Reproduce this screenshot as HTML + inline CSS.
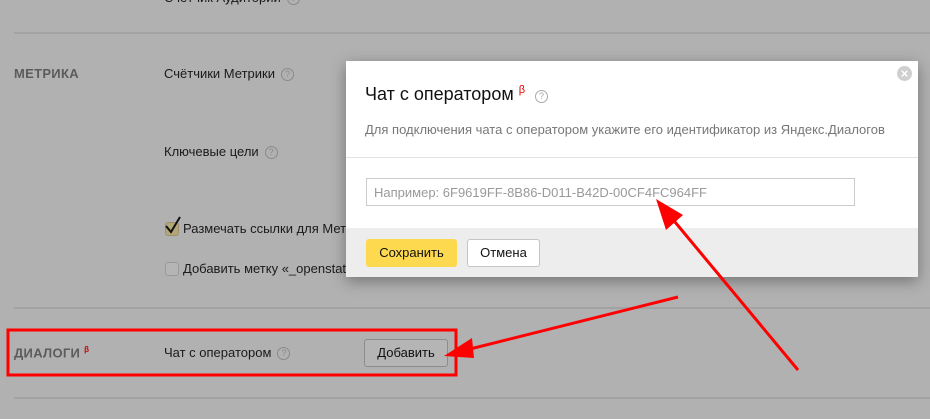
<!DOCTYPE html>
<html><head><meta charset="utf-8"><style>
*{margin:0;padding:0;box-sizing:border-box}
body{width:930px;height:419px;overflow:hidden;background:#b1b1b1;font-family:"Liberation Sans","DejaVu Sans",sans-serif;position:relative;color:#111}
.a{position:absolute;white-space:nowrap}
.line{position:absolute;left:14px;right:0;height:2px;background:#a3a3a3}
.sec{font-weight:bold;color:#5c5c5c;font-size:13px;letter-spacing:.3px}
.t{font-size:13px;color:#1a1a1a}
.q{display:inline-block;width:13px;height:13px;border:1px solid #8a8a8a;border-radius:50%;font-size:9px;line-height:11px;text-align:center;color:#8a8a8a;vertical-align:1px;margin-left:6px}
.cb{position:absolute;width:14px;height:14px;border:1px solid #999;border-radius:3px;background:#b5b5b5}
.modal{position:absolute;left:346px;top:61px;width:572px;height:216px;background:#fff;box-shadow:0 4px 14px rgba(0,0,0,.35)}
.btn{position:absolute;border-radius:3px;font-size:13px;text-align:center}
</style></head><body>
<div class="a t" style="left:164px;top:-10px">Счётчик Аудитории<span class="q">?</span></div>
<div class="line" style="top:32px"></div>
<div class="line" style="top:307px"></div>
<div class="line" style="top:397px"></div>
<div class="a sec" style="left:14px;top:66px">МЕТРИКА</div>
<div class="a t" style="left:164px;top:66px">Счётчики Метрики<span class="q">?</span></div>
<div class="a t" style="left:164px;top:144px">Ключевые цели<span class="q">?</span></div>
<div class="cb" style="left:165px;top:222px;background:#b3a77a;border-color:#9a8f66"></div>
<svg class="a" style="left:163px;top:215px" width="20" height="22"><path d="M3 11 L8 17 L17 2" stroke="#111" stroke-width="2" fill="none"/></svg>
<div class="a t" style="left:183px;top:221px">Размечать ссылки для Метрики</div>
<div class="cb" style="left:165px;top:262px"></div>
<div class="a t" style="left:183px;top:261px">Добавить метку «_openstat»</div>
<div class="a sec" style="left:14px;top:345px">ДИАЛОГИ <sup style="color:#c00;font-size:8px">β</sup></div>
<div class="a t" style="left:164px;top:345px">Чат с оператором<span class="q">?</span></div>
<div class="btn" style="left:364px;top:339px;width:84px;height:28px;border:1px solid #8c8c8c;background:#b5b5b5;line-height:26px">Добавить</div>

<div class="modal">
  <div class="a" style="left:19px;top:23px;font-size:18px;color:#111">Чат с оператором <sup style="color:#e00;font-size:11px">β</sup><span class="q" style="margin-left:10px;border-color:#aaa;color:#aaa">?</span></div>
  <div class="a" style="left:19px;top:61px;font-size:13px;color:#777">Для подключения чата с оператором укажите его идентификатор из Яндекс.Диалогов</div>
  <div class="a" style="left:0;right:0;top:96px;height:1px;background:#e3e3e3"></div>
  <div class="a" style="left:20px;top:117px;width:489px;height:28px;border:1px solid #ccc;font-size:13px;color:#999;padding:6px 7px">Например: 6F9619FF-8B86-D011-B42D-00CF4FC964FF</div>
  <div class="a" style="left:0;right:0;top:167px;bottom:0;background:#ededed"></div>
  <div class="btn" style="left:20px;top:178px;width:91px;height:28px;background:#fdd94f;line-height:28px">Сохранить</div>
  <div class="btn" style="left:121px;top:178px;width:73px;height:28px;border:1px solid #c5c5c5;background:#fff;line-height:26px">Отмена</div>
  <div class="a" style="left:551px;top:5px;width:15px;height:15px;border-radius:50%;background:#cfcfcf;color:#fff;font-size:13px;line-height:15px;text-align:center;font-weight:bold">×</div>
</div>

<svg class="a" style="left:0;top:0" width="930" height="419">
<rect x="8" y="330" width="448" height="45" fill="none" stroke="#f00" stroke-width="3"/>
<g stroke="#f00" stroke-width="3" fill="#f00">
<line x1="678" y1="297" x2="458" y2="352"/>
<polygon points="444,356 472,338 474,358" stroke="none"/>
<line x1="798" y1="370" x2="665" y2="210"/>
<polygon points="656,199 683,215 666,230" stroke="none"/>
</g>
</svg>
</body></html>
